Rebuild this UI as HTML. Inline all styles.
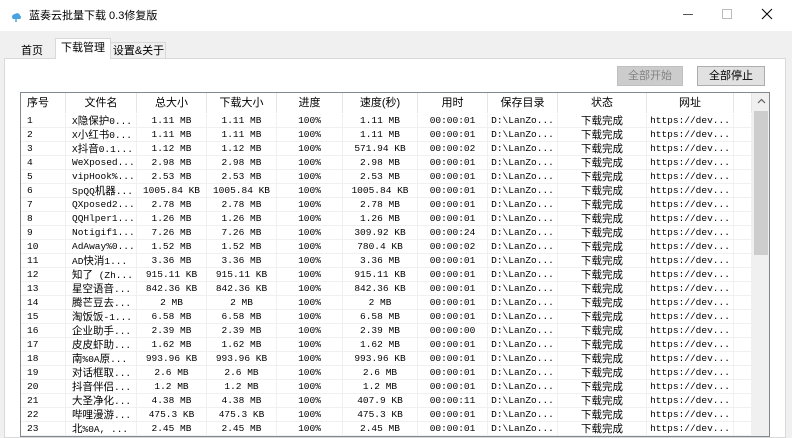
<!DOCTYPE html>
<html><head><meta charset="utf-8"><style>
*{margin:0;padding:0;box-sizing:border-box}
body{width:792px;height:434px;overflow:hidden;background:#f0f0f0;font-family:"Liberation Sans","Noto Sans CJK SC",sans-serif;font-size:11px;color:#000;position:relative}
.abs{position:absolute}
#title{left:0;top:0;width:792px;height:31px;background:#fff}
.tab{position:absolute;font-size:11px;line-height:16px;text-align:center;white-space:nowrap}
#panel{left:4px;top:58px;width:782px;height:380px;background:#fff;border:1px solid #d9d9d9}
.btn{position:absolute;height:20px;line-height:18px;text-align:center;font-size:11px}
#list{left:20px;top:92px;width:750px;height:345px;border:1px solid #828790;background:#fff;overflow:hidden}
.hd{position:absolute;top:0;height:20px;line-height:20px;text-align:center;font-size:11px;border-right:1px solid #e5e5e5;white-space:nowrap}
.row{position:absolute;left:0;width:732px;height:14px;border-bottom:1px solid #f0f0f0}
.c{position:absolute;top:0;height:14px;line-height:14px;text-align:center;font-family:"Liberation Mono","Noto Sans CJK SC",monospace;font-size:9.5px;border-right:1px solid #f0f0f0;white-space:nowrap;overflow:hidden}
.c b{font-weight:normal;font-family:"Noto Sans CJK SC",sans-serif;font-size:10.5px}
.cj{font-family:"Liberation Sans","Noto Sans CJK SC",sans-serif;font-size:10.5px}
</style></head><body>
<div id="title" class="abs">
<svg class="abs" style="left:10px;top:11px" width="12" height="12" viewBox="0 0 12 12"><path d="M2 6a3 3 0 0 1 3-3a3 3 0 0 1 5 1.5a2 2 0 0 1 0 3.5H3a2 2 0 0 1-1-2z" fill="#4aa3df"/><path d="M6 7v4" stroke="#4aa3df" stroke-width="1.5"/></svg>
<div class="abs" style="left:29px;top:8px;font-size:11px;line-height:16px">蓝奏云批量下载 0.3修复版</div>
<div class="abs" style="left:683px;top:14px;width:10px;height:1px;background:#555"></div>
<div class="abs" style="left:722px;top:9px;width:10px;height:10px;border:1px solid #bbb"></div>
<svg class="abs" style="left:761px;top:8px" width="12" height="12"><path d="M1 1L11 11M11 1L1 11" stroke="#000" stroke-width="1"/></svg>
</div>
<div id="panel" class="abs"></div>
<div class="abs" style="left:55px;top:38px;width:56px;height:21px;background:#fff;border:1px solid #d9d9d9;border-bottom:none"></div>
<div class="abs" style="left:111px;top:42px;width:55px;height:16px;border:1px solid #d9d9d9;border-bottom:none;border-left:none"></div>
<div class="tab" style="left:14px;top:43px;width:36px">首页</div>
<div class="tab" style="left:55px;top:40px;width:56px">下载管理</div>
<div class="tab" style="left:111px;top:43px;width:55px">设置&amp;关于</div>
<div class="btn" style="left:617px;top:66px;width:66px;background:#cccccc;border:1px solid #bfbfbf;color:#838383">全部开始</div>
<div class="btn" style="left:697px;top:66px;width:68px;background:#e1e1e1;border:1px solid #adadad">全部停止</div>
<div id="list" class="abs">
<div class="abs" style="left:731px;top:0;width:18px;height:345px;background:#f0f0f0"></div>
<div class="abs" style="left:733px;top:18px;width:14px;height:144px;background:#cdcdcd"></div>
<svg class="abs" style="left:736px;top:5px" width="9" height="6"><path d="M1 5L4.5 1.5L8 5" stroke="#606060" fill="none" stroke-width="1.2"/></svg>
<div id="hdr"></div><div id="rows"></div>
</div>
<script>
var b=[0,45,116,186,256,322,397,467,537,626,713,731];
var H=["序号","文件名","总大小","下载大小","进度","速度(秒)","用时","保存目录","状态","网址",""];
var h="";
for(var i=0;i<11;i++){h+='<div class="hd" style="left:'+b[i]+'px;width:'+(b[i+1]-b[i])+'px;'+(i==0?'text-align:left;padding-left:6px;':'')+'">'+H[i]+'</div>';}
document.getElementById("hdr").innerHTML=h;
var D=[["X隐保护0...","1.11 MB","1.11 MB","1.11 MB","00:00:01"],
["X小红书0...","1.11 MB","1.11 MB","1.11 MB","00:00:01"],
["X抖音0.1...","1.12 MB","1.12 MB","571.94 KB","00:00:02"],
["WeXposed...","2.98 MB","2.98 MB","2.98 MB","00:00:01"],
["vipHook%...","2.53 MB","2.53 MB","2.53 MB","00:00:01"],
["SpQQ机器...","1005.84 KB","1005.84 KB","1005.84 KB","00:00:01"],
["QXposed2...","2.78 MB","2.78 MB","2.78 MB","00:00:01"],
["QQHlper1...","1.26 MB","1.26 MB","1.26 MB","00:00:01"],
["Notigif1...","7.26 MB","7.26 MB","309.92 KB","00:00:24"],
["AdAway%0...","1.52 MB","1.52 MB","780.4 KB","00:00:02"],
["AD快消1...","3.36 MB","3.36 MB","3.36 MB","00:00:01"],
["知了 (Zh...","915.11 KB","915.11 KB","915.11 KB","00:00:01"],
["星空语音...","842.36 KB","842.36 KB","842.36 KB","00:00:01"],
["腾芒豆去...","2 MB","2 MB","2 MB","00:00:01"],
["淘饭饭-1...","6.58 MB","6.58 MB","6.58 MB","00:00:01"],
["企业助手...","2.39 MB","2.39 MB","2.39 MB","00:00:00"],
["皮皮虾助...","1.62 MB","1.62 MB","1.62 MB","00:00:01"],
["南%0A原...","993.96 KB","993.96 KB","993.96 KB","00:00:01"],
["对话框取...","2.6 MB","2.6 MB","2.6 MB","00:00:01"],
["抖音伴侣...","1.2 MB","1.2 MB","1.2 MB","00:00:01"],
["大圣净化...","4.38 MB","4.38 MB","407.9 KB","00:00:11"],
["哔哩漫游...","475.3 KB","475.3 KB","475.3 KB","00:00:01"],
["北%0A, ...","2.45 MB","2.45 MB","2.45 MB","00:00:01"]];
function w(s){return s.replace(/([\u3400-\u9fff]+)/g,'<b>$1</b>');}
var r="";
for(var k=0;k<D.length;k++){var d=D[k];
var v=[String(k+1),w(d[0]),d[1],d[2],"100%",d[3],d[4],"D:\\LanZo...","下载完成","https://dev...",""];
r+='<div class="row" style="top:'+(21+k*14)+'px">';
for(var i=0;i<11;i++){var st='left:'+b[i]+'px;width:'+(b[i+1]-b[i])+'px;';
if(i==0)st+='text-align:left;padding-left:6px;';
if(i==1)st+='text-align:left;padding-left:6px;';
r+='<div class="c'+(i==8?' cj':'')+'" style="'+st+'">'+v[i]+'</div>';}
r+='</div>';}
document.getElementById("rows").innerHTML=r;
</script>
</body></html>
